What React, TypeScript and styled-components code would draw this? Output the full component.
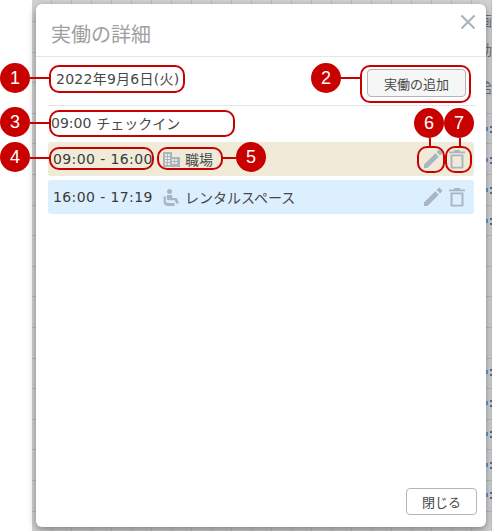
import React from "react";
import styled, { createGlobalStyle } from "styled-components";

const Global = createGlobalStyle`
  html, body { margin: 0; padding: 0; background: #fff; }
  body { font-family: "DejaVu Sans", "Noto Sans CJK JP", sans-serif; }
`;

const Stage = styled.div`
  position: relative;
  width: 492px;
  height: 531px;
  overflow: hidden;
  display: flex;
  background: #fff;
`;

const Gutter = styled.div`
  width: 32px;
  flex: none;
`;

const Backdrop = styled.div`
  position: relative;
  flex: 1;
  padding: 4px 6px 4px 4px;
  background-color: #d2d3d4;
  background-image:
    repeating-linear-gradient(to bottom, transparent 0 21px, #b5bcc2 21px 22px, transparent 22px 30.6px),
    repeating-linear-gradient(to right, transparent 0 19px, #bcc0c4 19px 20px);
`;

const Modal = styled.div`
  position: relative;
  z-index: 1;
  height: 100%;
  background: #fff;
  border-radius: 6px;
  box-shadow: 0 3px 8px rgba(0, 0, 0, 0.4);
  display: flex;
  flex-direction: column;
`;

const Header = styled.header`
  height: 53px;
  flex: none;
  box-sizing: border-box;
  border-bottom: 1px solid #e5e5e5;
  display: flex;
  align-items: center;
  justify-content: space-between;
  padding: 7px 10px 0 15px;
`;

const Title = styled.h2`
  margin: 0;
  font-size: 20px;
  font-weight: 400;
  color: #a0a0a0;
`;

const CloseIcon = styled.svg`
  width: 16px;
  height: 16px;
  margin-top: -23px;
  stroke: #a9b5c0;
  stroke-width: 2.2;
  fill: none;
`;

const Body = styled.main`
  flex: 1;
  padding: 0 12px;
  display: flex;
  flex-direction: column;
`;

const DateRow = styled.div`
  height: 49px;
  box-sizing: border-box;
  border-bottom: 1px solid #e5e5e5;
  display: flex;
  align-items: center;
  justify-content: space-between;
  padding: 4px 10px 0 8px;
  margin-right: -2px;
`;

const DateText = styled.span`
  font-size: 14px;
  color: #484848;
  letter-spacing: 0.25px;
  margin-bottom: 10px;
`;

const Button = styled.button<{ $plain?: boolean }>`
  font-family: inherit;
  font-size: 13px;
  color: #484848;
  background: ${(p) => (p.$plain ? "#fff" : "#f6f6f6")};
  border: 1px solid #b5b5b5;
  border-radius: 4px;
  padding: 0;
  height: ${(p) => (p.$plain ? "27px" : "28px")};
  width: ${(p) => (p.$plain ? "71px" : "99px")};
`;

const CheckIn = styled.div`
  height: 36px;
  box-sizing: border-box;
  display: flex;
  align-items: center;
  padding: 0 0 2px 3px;
  font-size: 14px;
  color: #484848;
  gap: 5px;
`;

const Rows = styled.div`
  display: flex;
  flex-direction: column;
  gap: 4px;
`;

const Row = styled.div<{ $bg: string }>`
  height: 34px;
  width: 426px;
  border-radius: 3px;
  background: ${(p) => p.$bg};
  display: flex;
  align-items: center;
  padding: 0 9px 0 5px;
  box-sizing: border-box;
  font-size: 14px;
  color: #3a3a3a;
`;

const Time = styled.span`
  width: 110px;
  flex: none;
  font-size: 14px;
  letter-spacing: 0.4px;
`;

const Place = styled.span`
  display: flex;
  align-items: center;
  gap: 5px;
  flex: 1;
  color: #484848;
`;

const PlaceIcon = styled.svg`
  width: 17px;
  height: 17px;
  fill: #a9b5c0;
  flex: none;
`;

const PencilIcon = styled.svg`
  width: 20px;
  height: 20px;
  fill: #a9b5c0;
  flex: none;
`;

const TrashIcon = styled.svg`
  width: 16px;
  height: 20px;
  fill: #a9b5c0;
  flex: none;
  margin-left: 6px;
`;

const Footer = styled.footer`
  flex: none;
  display: flex;
  justify-content: flex-end;
  padding: 0 9px 12px 0;
`;

const Pill = styled.div<{ $x: number; $y: number; $w: number; $h: number }>`
  position: absolute;
  z-index: 2;
  left: ${(p) => p.$x}px;
  top: ${(p) => p.$y}px;
  width: ${(p) => p.$w}px;
  height: ${(p) => p.$h}px;
  box-sizing: border-box;
  border: 2px solid #c80000;
  border-radius: 10px;
`;

const Badge = styled.div<{ $x: number; $y: number }>`
  position: absolute;
  z-index: 3;
  left: ${(p) => p.$x - 15}px;
  top: ${(p) => p.$y - 15}px;
  width: 30px;
  height: 30px;
  border-radius: 50%;
  background: #c80000;
  color: #fff;
  font-family: "Liberation Sans", sans-serif;
  font-size: 18px;
  display: flex;
  align-items: center;
  justify-content: center;
`;

const Connector = styled.div<{ $x: number; $y: number; $w: number; $h: number }>`
  position: absolute;
  z-index: 2;
  left: ${(p) => p.$x}px;
  top: ${(p) => p.$y}px;
  width: ${(p) => p.$w}px;
  height: ${(p) => p.$h}px;
  background: #c80000;
`;

const Mark = styled.span<{ $y: number }>`
  position: absolute;
  left: 458px;
  top: ${(p) => p.$y}px;
  width: 2px;
  height: 2px;
  background: #7a5a8c;
  box-shadow: 0 5px 0 #7a5a8c, -4px 1px 0 #5aa0d8, -4px 3px 0 #5aa0d8;
`;

const Behind = styled.span<{ $y: number }>`
  position: absolute;
  left: 446px;
  top: ${(p) => p.$y}px;
  font-size: 14px;
  line-height: 16px;
  color: #6f7479;
`;

const Pencil = () => (
  <PencilIcon viewBox="0 0 20 20">
    <path d="M1 15.500 12.300 4.200l3.500 3.500L4.500 19H1v-3.500zM13.600 2.900l1.700-1.700c.5-.5 1.200-.5 1.700 0l1.800 1.800c.5.5.5 1.200 0 1.700l-1.700 1.700-3.500-3.500z" />
  </PencilIcon>
);

const Trash = () => (
  <TrashIcon viewBox="0 0 16 20">
    <path
      fillRule="evenodd"
      d="M5.500 1h5l.8 1.500H16v1.800H0V2.500h4.700L5.500 1zM1.500 5.500h13V18c0 1-.7 1.600-1.600 1.600H3.100c-.9 0-1.600-.6-1.600-1.600V5.500zm2 1.800v10.500h9V7.300h-9z"
    />
  </TrashIcon>
);

const Building = () => (
  <PlaceIcon viewBox="0 0 17 17">
    <path
      fillRule="evenodd"
      d="M0 1h9v5h8v10H0V1zm2 2v2h2V3H2zm3 0v2h2V3H5zM2 6v2h2V6H2zm3 0v2h2V6H5zM2 9v2h2V9H2zm3 0v2h2V9H5zm-3 3v2h2v-2H2zm3 0v2h2v-2H5zm4-4v2h2V8H9zm3 0v2h2V8h-2zm-3 3v2h2v-2H9zm3 0v2h2v-2h-2z"
    />
  </PlaceIcon>
);

const Seat = () => (
  <PlaceIcon viewBox="0 0 17 17">
    <circle cx="6.500" cy="2.500" r="2.500" />
    <path d="M3.800 6h5.200l.5 3h3c.9 0 1.500.4 1.800 1.100l1.700 4.400h-2.900l-1.300-3.300H5.500c-1 0-1.700-.7-1.700-1.700V6z" />
    <path d="M.5 7.500h2.300v4.300c0 1.300.8 2.100 2.100 2.100h6.600v3H4.900C2.200 16.900.5 15 .5 12.500v-5z" />
  </PlaceIcon>
);

const pills = [
  [49, 65, 136, 28],
  [360, 65, 111, 38],
  [49, 110, 186, 27],
  [49, 147, 105, 23],
  [157, 147, 66, 23],
  [417, 146, 28, 27],
  [445, 146, 27, 27],
];

const badges = [
  [15, 78, "1"],
  [326, 78, "2"],
  [15, 122, "3"],
  [15, 157, "4"],
  [251, 157, "5"],
  [429, 123, "6"],
  [459, 123, "7"],
] as const;

const connectors = [
  [30, 77, 19, 2],
  [341, 77, 19, 2],
  [30, 122, 19, 2],
  [30, 157, 19, 2],
  [223, 157, 13, 2],
  [429, 138, 2, 8],
  [459, 138, 2, 8],
];

const marks = [126, 157, 187, 218, 369, 400, 431, 462, 492];
const behind = [
  [13, "画"],
  [42, "動"],
  [80, "給"],
] as const;

export default function App() {
  return (
    <Stage>
      <Global />
      <Gutter />
      <Backdrop>
        {marks.map((y) => (
          <Mark key={y} $y={y} />
        ))}
        {behind.map(([y, c]) => (
          <Behind key={y} $y={y}>
            {c}
          </Behind>
        ))}
        <Modal>
          <Header>
            <Title>実働の詳細</Title>
            <CloseIcon viewBox="0 0 16 16">
              <path d="M1.500 1.500l13 13M14.500 1.500l-13 13" />
            </CloseIcon>
          </Header>
          <Body>
            <DateRow>
              <DateText>2022年9月6日(火)</DateText>
              <Button>実働の追加</Button>
            </DateRow>
            <CheckIn>
              <span>09:00</span>
              <span>チェックイン</span>
            </CheckIn>
            <Rows>
              <Row $bg="#f0ead8">
                <Time>09:00 - 16:00</Time>
                <Place>
                  <Building />
                  職場
                </Place>
                <Pencil />
                <Trash />
              </Row>
              <Row $bg="#dcefff">
                <Time>16:00 - 17:19</Time>
                <Place>
                  <Seat />
                  レンタルスペース
                </Place>
                <Pencil />
                <Trash />
              </Row>
            </Rows>
          </Body>
          <Footer>
            <Button $plain>閉じる</Button>
          </Footer>
        </Modal>
      </Backdrop>
      {pills.map(([x, y, w, h]) => (
        <Pill key={`${x}-${y}`} $x={x} $y={y} $w={w} $h={h} />
      ))}
      {connectors.map(([x, y, w, h]) => (
        <Connector key={`${x}-${y}`} $x={x} $y={y} $w={w} $h={h} />
      ))}
      {badges.map(([x, y, n]) => (
        <Badge key={n} $x={x} $y={y}>
          {n}
        </Badge>
      ))}
    </Stage>
  );
}
